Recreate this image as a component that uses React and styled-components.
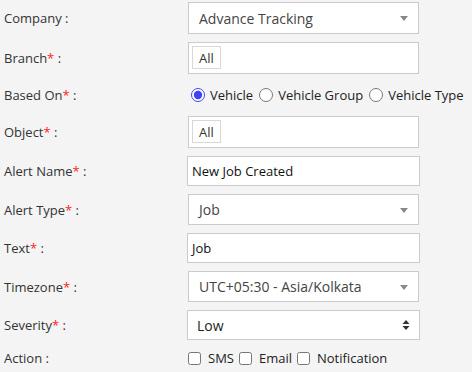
import React from "react"
import styled, { createGlobalStyle } from "styled-components"

const GlobalStyle = createGlobalStyle`
  body {
    margin: 0;
    background: #f4f4f4;
    font-family: "Open Sans", "Liberation Sans", sans-serif;
    font-size: 13px;
    color: #333;
  }
`

const Form = styled.div`
  padding-top: 2px;
  width: 472px;
`

const Row = styled.div`
  display: flex;
  align-items: center;
  height: ${props => props.h || 32}px;
  margin-bottom: 8px;
`

const Label = styled.div`
  box-sizing: border-box;
  width: 187px;
  padding-left: 4px;
  font-size: 13px;
  color: #333;
  flex-shrink: 0;
`

const Star = styled.span`
  color: #ff2222;
`

const SelectBox = styled.div`
  box-sizing: border-box;
  margin-left: 1px;
  width: 231px;
  height: 100%;
  background: #fff;
  border: 1px solid #cbcbcb;
  display: flex;
  align-items: center;
  justify-content: space-between;
  padding: 0 10px 0 10px;
  font-size: 14px;
  color: #444;
`

const Arrow = styled.span`
  width: 0;
  height: 0;
  border-left: 4px solid transparent;
  border-right: 4px solid transparent;
  border-top: 5px solid #888;
  margin-top: 1px;
`

const MultiBox = styled.div`
  box-sizing: border-box;
  margin-left: 1px;
  width: 231px;
  height: 100%;
  background: #fff;
  border: 1px solid #cbcbcb;
  padding: 3px;
`

const Tag = styled.span`
  display: inline-flex;
  align-items: center;
  box-sizing: border-box;
  height: 23px;
  padding: 0 6px;
  border: 1px solid #d8d8d8;
  background: #fff;
  font-size: 13px;
  color: #333;
`

const TextInput = styled.div`
  box-sizing: border-box;
  width: 233px;
  height: 100%;
  background: #fff;
  border: 1px solid #cbcbcb;
  display: flex;
  align-items: center;
  padding-left: 4px;
  font-size: 13px;
  color: #111;
`

const NativeSelect = styled(TextInput)`
  justify-content: space-between;
  padding: 0 9px 0 9px;
  font-size: 14px;
  color: #222;
`

const Options = styled.div`
  display: flex;
  align-items: center;
  font-size: 13px;
  color: #222;
`

const Choice = styled.label`
  display: inline-flex;
  align-items: center;
  margin-left: ${props => props.first ? props.first : 0}px;
  margin-right: ${props => props.gap || 5}px;

  input {
    margin: 0 ${props => props.inner || 6}px 0 0;
    width: ${props => props.size || 13}px;
    height: ${props => props.size || 13}px;
    accent-color: #4343f5;
  }
`

const UpDown = () => (
  <svg width="8" height="12" viewBox="0 0 8 12">
    <path d="M4 1 L7.5 5 H0.5 Z" fill="#333" />
    <path d="M4 11 L7.5 7 H0.5 Z" fill="#333" />
  </svg>
)

const Req = ({ children }) => (
  <Label>{children}<Star>*</Star> :</Label>
)

export default function App() {
  return (
    <>
      <GlobalStyle />
      <Form>
        <Row>
          <Label>Company :</Label>
          <SelectBox>Advance Tracking<Arrow /></SelectBox>
        </Row>
        <Row>
          <Req>Branch</Req>
          <MultiBox><Tag>All</Tag></MultiBox>
        </Row>
        <Row h={26}>
          <Req>Based On</Req>
          <Options>
            <Choice first={4} size={14} inner={5} gap={6}><input type="radio" name="based" defaultChecked />Vehicle</Choice>
            <Choice size={14} inner={5} gap={6}><input type="radio" name="based" />Vehicle Group</Choice>
            <Choice size={14} inner={5} gap={6}><input type="radio" name="based" />Vehicle Type</Choice>
          </Options>
        </Row>
        <Row>
          <Req>Object</Req>
          <MultiBox><Tag>All</Tag></MultiBox>
        </Row>
        <Row h={30}>
          <Req>Alert Name</Req>
          <TextInput>New Job Created</TextInput>
        </Row>
        <Row h={31}>
          <Req>Alert Type</Req>
          <SelectBox>Job<Arrow /></SelectBox>
        </Row>
        <Row h={30}>
          <Req>Text</Req>
          <TextInput>Job</TextInput>
        </Row>
        <Row h={31}>
          <Req>Timezone</Req>
          <SelectBox>UTC+05:30 - Asia/Kolkata<Arrow /></SelectBox>
        </Row>
        <Row h={30}>
          <Req>Severity</Req>
          <NativeSelect>Low<UpDown /></NativeSelect>
        </Row>
        <Row h={20}>
          <Label>Action :</Label>
          <Options>
            <Choice first={1} inner={7} gap={5}><input type="checkbox" />SMS</Choice>
            <Choice inner={7} gap={5}><input type="checkbox" />Email</Choice>
            <Choice inner={7} gap={5}><input type="checkbox" />Notification</Choice>
          </Options>
        </Row>
      </Form>
    </>
  )
}
